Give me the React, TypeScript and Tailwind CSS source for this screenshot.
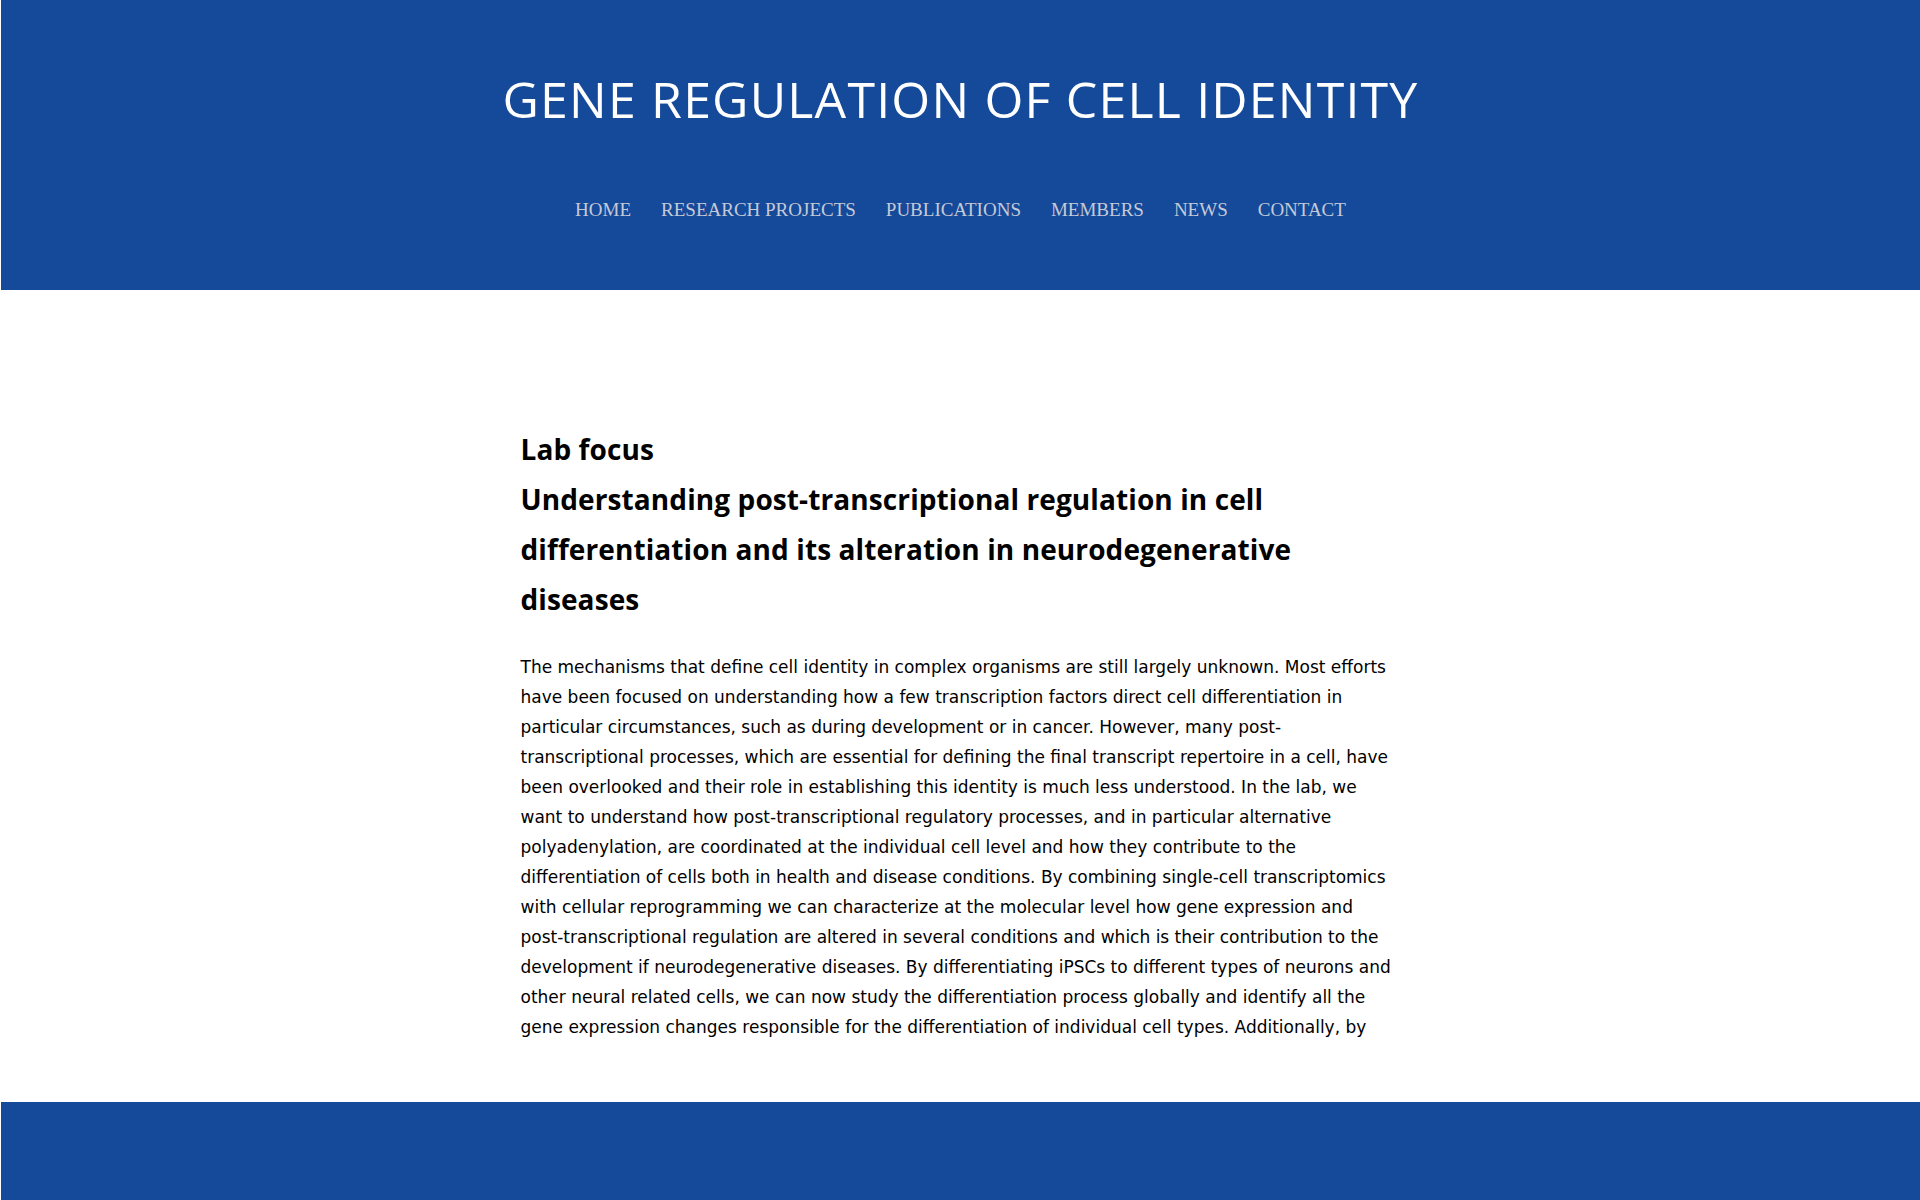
const NAV = ["HOME", "RESEARCH PROJECTS", "PUBLICATIONS", "MEMBERS", "NEWS", "CONTACT"];

const BODY =
  "The mechanisms that define cell identity in complex organisms are still largely unknown. Most efforts have been focused on understanding how a few transcription factors direct cell differentiation in particular circumstances, such as during development or in cancer. However, many post-transcriptional processes, which are essential for defining the final transcript repertoire in a cell, have been overlooked and their role in establishing this identity is much less understood. In the lab, we want to understand how post-transcriptional regulatory processes, and in particular alternative polyadenylation, are coordinated at the individual cell level and how they contribute to the differentiation of cells both in health and disease conditions. By combining single-cell transcriptomics with cellular reprogramming we can characterize at the molecular level how gene expression and post-transcriptional regulation are altered in several conditions and which is their contribution to the development if neurodegenerative diseases. By differentiating iPSCs to different types of neurons and other neural related cells, we can now study the differentiation process globally and identify all the gene expression changes responsible for the differentiation of individual cell types. Additionally, by";

export default function App() {
  return (
    <div className="min-h-[1200px] w-full bg-white pl-px">
      <header className="h-[290px] bg-[#154a9a] pt-[69px] flex flex-col items-center">
        <h1 className="text-[50px] leading-[60px] tracking-[1.2px] text-white font-['Open_Sans',sans-serif] font-normal">
          GENE REGULATION OF CELL IDENTITY
        </h1>
        <nav className="mt-[67px] flex gap-[30px] text-[19px] leading-[28px] text-[#c6c9d6] font-['Liberation_Serif',serif]">
          {NAV.map((item) => (
            <a key={item} href="#" className="hover:text-white">
              {item}
            </a>
          ))}
        </nav>
      </header>

      <main className="mx-auto w-[880px] pt-[134px] pb-[60px] text-black">
        <div className="max-w-[800px] font-['Open_Sans',sans-serif]">
          <h2 className="text-[28px] leading-[50px] font-bold tracking-[0.1px]">Lab focus</h2>
          <h2 className="text-[28px] leading-[50px] font-bold tracking-[0.1px]">
            Understanding post-transcriptional regulation in cell differentiation and its alteration in
            neurodegenerative diseases
          </h2>
        </div>
        <p className="mt-[28px] text-[17px] leading-[30px] font-['DejaVu_Sans',sans-serif]">{BODY}</p>
      </main>

      <footer className="h-[98px] bg-[#154a9a]" />
    </div>
  );
}
